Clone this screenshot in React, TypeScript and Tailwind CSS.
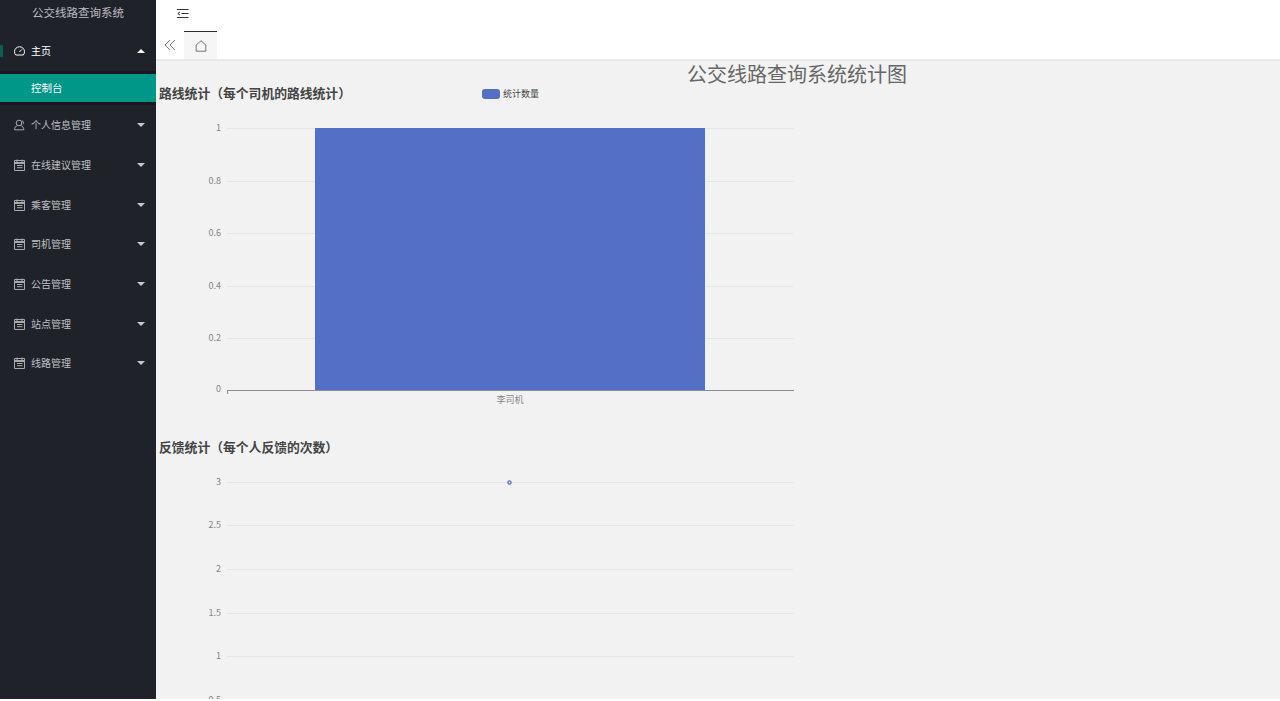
import type { ReactNode } from "react";

const font = { fontFamily: '"Noto Sans CJK SC", sans-serif' };

function GaugeIcon() {
  return (
    <svg width="11" height="12" viewBox="0 0 11 12" fill="none" stroke="currentColor" strokeWidth="1">
      <path d="M1.700 10h7.600a5 5 0 1 0-7.600 0z" />
      <path d="M5.300 7 7.900 4.400" />
    </svg>
  );
}

function UserIcon() {
  return (
    <svg width="11" height="12" viewBox="0 0 11 12" fill="none" stroke="#b4b5b8" strokeWidth="0.9">
      <circle cx="5" cy="4" r="2.800" />
      <path d="M3.400 6.400C1.800 7 .6 8.600.5 10.800h9.400C9.800 8.600 8.400 7 6.800 6.400" />
      <path d="M7.800 1.500c1.500.5 2 2.500 1.200 3.800" />
    </svg>
  );
}

function TableIcon() {
  return (
    <svg width="11" height="12" viewBox="0 0 11 12" fill="none" stroke="#a8a9ac" strokeWidth="1">
      <path d="M.5 1.500h10v10H.5z" />
      <path d="M3 .5v3M8 .5v3M.5 3.500h10M.5 4.500h10M3 6.500h5.500M3 8.700h5.500" />
    </svg>
  );
}

function MenuRow({ icon, label, open }: { icon: ReactNode; label: string; open?: boolean }) {
  return (
    <div className={`relative flex h-[39.7px] items-center pl-[14px] pr-[11px] ${open ? "text-white" : "text-[#bfc0c3]"}`}>
      {open && <div className="absolute left-0 top-[14px] h-[12px] w-[3px] bg-[#0b5f55]" />}
      <span className="mr-[6px] flex w-[11px]">{icon}</span>
      <span className="text-[10px] leading-none">{label}</span>
      <span
        className={`ml-auto h-0 w-0 border-x-4 border-x-transparent ${
          open ? "border-b-4 border-b-white" : "border-t-4 border-t-[#c8c8ca]"
        }`}
      />
    </div>
  );
}

function Sidebar() {
  const rows: [ReactNode, string][] = [
    [<UserIcon />, "个人信息管理"],
    [<TableIcon />, "在线建议管理"],
    [<TableIcon />, "乘客管理"],
    [<TableIcon />, "司机管理"],
    [<TableIcon />, "公告管理"],
    [<TableIcon />, "站点管理"],
    [<TableIcon />, "线路管理"],
  ];
  return (
    <aside className="w-[156px] shrink-0 bg-[#20222a]">
      <div className="h-[31px] pt-[5px] text-center text-[11.500px] leading-[15px] text-[#bcbdc0]">公交线路查询系统</div>
      <MenuRow icon={<GaugeIcon />} label="主页" open />
      <div className="bg-[#17191e] pb-[3.700px] pt-[3px]">
        <div className="flex h-[28px] items-center bg-[#009688] pl-[31px] text-[10.500px] text-white">控制台</div>
      </div>
      {rows.map(([icon, label]) => (
        <MenuRow key={label} icon={icon} label={label} />
      ))}
    </aside>
  );
}

function TopBar() {
  return (
    <header className="shrink-0 border-b-2 border-[#e9e9e9] bg-white">
      <div className="flex h-[31px] items-start pl-[21px] pt-[9px]">
        <svg width="12" height="10" viewBox="0 0 12 10" fill="none" stroke="#333" strokeWidth="1">
          <path d="M0 .5h11.500M4.500 4.500h7M0 8.500h11.500" />
          <path d="M3 3 .8 4.500 3 6" />
        </svg>
      </div>
      <div className="flex h-[28px]">
        <div className="flex w-[28px] items-center justify-center text-[#7b7b7b]">
          <svg width="12" height="12" viewBox="0 0 12 12" fill="none" stroke="currentColor" strokeWidth="1">
            <path d="M6 1 1 6l5 5M11 1 6 6l5 5" />
          </svg>
        </div>
        <div className="flex w-[33px] items-center justify-center border-t border-[#2b2b2b] bg-[#f6f6f6] text-[#666]">
          <svg width="12" height="12" viewBox="0 0 12 12" fill="none" stroke="currentColor" strokeWidth="0.9">
            <path d="M6 .8 1.200 5v6.200h9.600V5z" />
          </svg>
        </div>
      </div>
    </header>
  );
}

// x positions are relative to the chart svg, which starts at x=159
const LEFT = 68;
const RIGHT = 634;
const LABEL = "#868686";

function BarChart() {
  const ticks = [
    ["1", 24],
    ["0.8", 77],
    ["0.6", 129],
    ["0.4", 182],
    ["0.2", 234],
  ] as const;
  return (
    <svg width="640" height="310" className="block" style={font}>
      {ticks.map(([label, y]) => (
        <g key={label}>
          <line x1={LEFT} x2={RIGHT} y1={y + 0.5} y2={y + 0.5} stroke="#e0e6f1" />
          <text x={LEFT - 6} y={y + 3} textAnchor="end" fontSize="9" fill={LABEL}>{label}</text>
        </g>
      ))}
      <rect x="156" y="24" width="390" height="262" fill="#5470c6" />
      <path d="M68 286.500H635M68.500 286v4" stroke="#8a8d99" fill="none" />
      <text x={LEFT - 6} y="288" textAnchor="end" fontSize="9" fill={LABEL}>0</text>
      <text x="351" y="299" textAnchor="middle" fontSize="9" fill={LABEL}>李司机</text>
    </svg>
  );
}

function LineChart() {
  const ticks = [
    ["3", 20],
    ["2.5", 63],
    ["2", 107],
    ["1.5", 151],
    ["1", 194],
    ["0.5", 238],
  ] as const;
  return (
    <svg width="640" height="250" className="block" style={font}>
      {ticks.map(([label, y]) => (
        <g key={label}>
          <line x1={LEFT} x2={RIGHT} y1={y + 0.5} y2={y + 0.5} stroke="#e0e6f1" />
          <text x={LEFT - 6} y={y + 3} textAnchor="end" fontSize="9" fill={LABEL}>{label}</text>
        </g>
      ))}
      <circle cx="350.500" cy="20.500" r="1.600" fill="#f2f2f2" stroke="#5470c6" strokeWidth="1.300" />
    </svg>
  );
}

export default function App() {
  return (
    <div className="flex h-[699px] overflow-hidden" style={font}>
      <Sidebar />
      <main className="flex min-w-0 flex-1 flex-col overflow-hidden bg-[#f2f2f2]">
        <TopBar />
        <div className="pl-[3px]">
          <h1 className="h-[26px] whitespace-nowrap pl-[528px] text-[20px] font-normal leading-[26px] text-[#666]">
            公交线路查询系统统计图
          </h1>
          <div className="mb-[4px] flex h-[13px] items-center">
            <h2 className="w-[323px] text-[12.800px] font-bold leading-none text-[#444]">路线统计（每个司机的路线统计）</h2>
            <span className="h-[10px] w-[18px] rounded-[3px] bg-[#5470c6]" />
            <span className="ml-[3px] text-[9px] leading-none text-[#444]">统计数量</span>
          </div>
          <BarChart />
          <h2 className="mt-[19px] flex h-[29px] items-center text-[12.800px] font-bold leading-none text-[#444]">反馈统计（每个人反馈的次数）</h2>
          <LineChart />
        </div>
      </main>
    </div>
  );
}
